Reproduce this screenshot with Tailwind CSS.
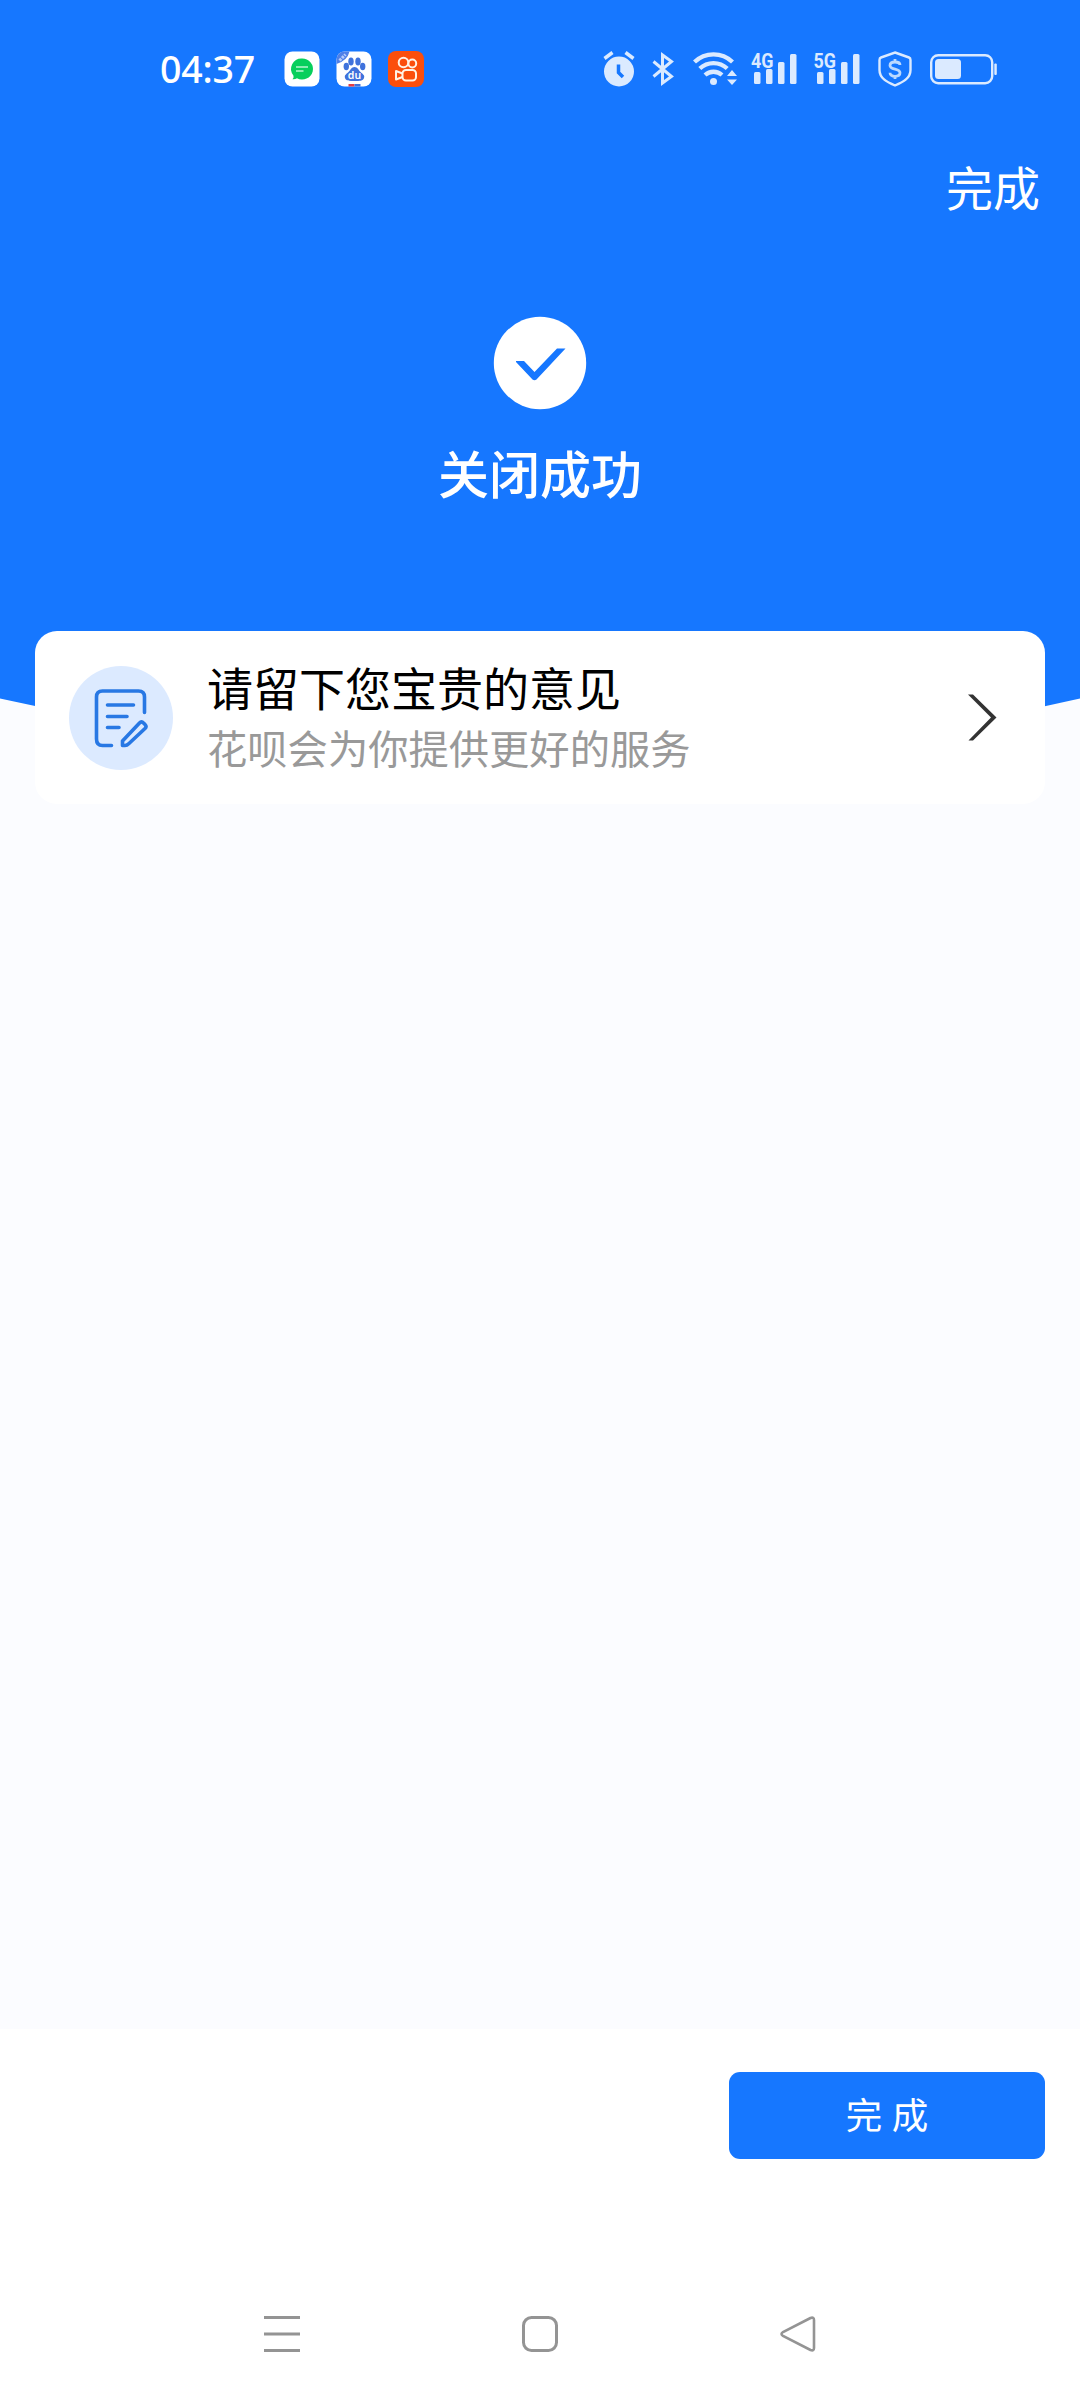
<!DOCTYPE html>
<html lang="zh-CN">
<head>
    <meta charset="UTF-8">
    <meta name="viewport" content="width=device-width, initial-scale=1.0">
    <title>关闭成功</title>
    <script src="https://cdn.jsdelivr.net/npm/@tailwindcss/browser@4"></script>
</head>
<body class="bg-white font-['Noto_Sans','Noto_Sans_CJK_SC',sans-serif]">
    <div class="w-[1080px] h-[2400px] flex flex-col overflow-hidden">
        <main class="h-[2029px] bg-[#fbfcff]">
            <!-- Blue header -->
            <header class="h-[631px] bg-[#1677ff] text-white flex flex-col">
                <!-- Status bar -->
                <div class="h-[138px] pl-[160px] pr-[83px] flex items-center justify-between">
                    <div class="flex items-center">
                        <span class="w-[124px] pb-[1px] text-[37.5px] leading-none font-medium tracking-[-0.2px]">04:37</span>
                        <div class="flex gap-4">
                            <svg class="w-9 h-9" viewBox="0 0 36 36">
                                <rect x="0.5" y="0.5" width="35" height="35" rx="8" fill="#fff"/>
                                <path d="M18 7.500a10.800 10.500 0 1 1-5 19.700q-2 1.300-4.500 1 1.500-1.500 1-3.500A10.500 10.500 0 0 1 18 7.500z" fill="#07cf5c"/>
                                <path d="M12 16h12M12 20h7.500" stroke="#b9f5cf" stroke-width="1.300"/>
                            </svg>
                            <svg class="w-9 h-9" viewBox="0 0 36 36">
                                <rect x="0.5" y="0.5" width="35" height="35" rx="8" fill="#fff"/>
                                <path d="M0.500 13V8.500a8 8 0 0 1 8-8H13.500q-2 9-13 12.500z" fill="#4f80e8"/>
                                <path d="M3.500 9.500l6-6" stroke="#b9cdfa" stroke-width="3" stroke-dasharray="2.500 1"/>
                                <g fill="#3f72dc">
                                    <ellipse cx="10.300" cy="15.500" rx="2.700" ry="3.700"/>
                                    <ellipse cx="15" cy="10.500" rx="2.700" ry="3.900"/>
                                    <ellipse cx="22" cy="10.500" rx="2.700" ry="3.900"/>
                                    <ellipse cx="26.700" cy="15.500" rx="2.700" ry="3.700"/>
                                    <path d="M18.500 16c3 0 4 3 6 5s4.500 3 3.500 6c-1 3-4 3-9.500 3s-8.500 0-9.500-3c-1-3 1.500-4 3.500-6s3-5 6-5z"/>
                                </g>
                                <text x="18.500" y="27.500" text-anchor="middle" font-size="10.500" font-weight="600" fill="#fff">du</text>
                                <path d="M12.500 35.500v-2.500h6v2.500z" fill="#e33b46"/><path d="M18.500 35.500v-2.500h6v2.500z" fill="#3f72dc"/>
                            </svg>
                            <svg class="w-9 h-9" viewBox="0 0 36 36">
                                <rect width="36" height="36" rx="8" fill="#fb4e0c"/>
                                <g fill="none" stroke="#fff3e6" stroke-width="2">
                                    <circle cx="15.500" cy="11.500" r="4.800"/>
                                    <circle cx="24.300" cy="12.500" r="3.900"/>
                                    <rect x="14.500" y="19" width="13.500" height="10.500" rx="3.500"/>
                                    <path d="M14.500 22.500l-6.500-2.500v8.500l6.500-2.500" stroke-linejoin="round"/>
                                </g>
                            </svg>
                        </div>
                    </div>
                    <div class="flex items-center">
                        <svg class="w-8 h-9 mr-[17px]" viewBox="0 0 32 36">
                            <circle cx="16" cy="20.500" r="15" fill="#dbeaff"/>
                            <path d="M1.500 7.500l8-6M30.500 7.500l-8-6" stroke="#dbeaff" stroke-width="3.500"/>
                            <path d="M15.500 13.500v8l4.500 4.500" fill="none" stroke="#1677ff" stroke-width="3.500"/>
                        </svg>
                        <svg class="w-[22px] h-9 mr-[18px]" viewBox="0 0 22 36">
                            <path d="M1.500 10.500L19.500 25.500 10.500 32V4L19.500 10.500 1.500 25.500" fill="none" stroke="#dbeaff" stroke-width="3"/>
                        </svg>
                        <svg class="w-[46px] h-9 mr-[11px]" viewBox="0 0 46 36">
                            <g fill="none" stroke="#dbeaff" stroke-width="4.300">
                                <path d="M2.500 11a27.500 27.500 0 0 1 38 0"/>
                                <path d="M7.800 17.500a20 20 0 0 1 27.400 0"/>
                                <path d="M13 24a12.700 12.700 0 0 1 17 0"/>
                            </g>
                            <circle cx="21.500" cy="30.500" r="3.500" fill="#dbeaff"/>
                            <path d="M35 25l5-6 5 6zM35 28.500h10l-5 5.500z" fill="#dbeaff"/>
                        </svg>
                        <svg class="w-[48px] h-9 mr-[15px] overflow-visible" viewBox="-2 0 48 36">
                            <text x="0" y="16.500" font-family="Roboto" font-size="20.500" font-weight="700" textLength="22.500" lengthAdjust="spacingAndGlyphs" fill="#dbeaff">4G</text>
                            <g fill="#dbeaff">
                                <rect x="3" y="21" width="6.500" height="12" rx="1.500"/>
                                <rect x="15" y="18" width="6.500" height="15" rx="1.500"/>
                                <rect x="27" y="11" width="6.500" height="22" rx="1.500"/>
                                <rect x="39" y="3" width="6.500" height="30" rx="1.500"/>
                            </g>
                        </svg>
                        <svg class="w-[48px] h-9 mr-[18px] overflow-visible" viewBox="-2 0 48 36">
                            <text x="-0.500" y="16.500" font-family="Roboto" font-size="20.500" font-weight="700" textLength="22.500" lengthAdjust="spacingAndGlyphs" fill="#dbeaff">5G</text>
                            <g fill="#dbeaff">
                                <rect x="3" y="21" width="6.500" height="12" rx="1.500"/>
                                <rect x="15" y="18" width="6.500" height="15" rx="1.500"/>
                                <rect x="27" y="11" width="6.500" height="22" rx="1.500"/>
                                <rect x="39" y="3" width="6.500" height="30" rx="1.500"/>
                            </g>
                        </svg>
                        <svg class="w-[34px] h-9 mr-[18px]" viewBox="0 0 34 36">
                            <path d="M17 1.500L31 6.500Q32.500 7 32.500 9v10c0 8-7 12-15.500 15.500C8.500 31 1.500 27 1.500 19V9q0-2 1.500-2.500z" fill="none" stroke="#dbeaff" stroke-width="2.400"/>
                            <path d="M22 14c0-2-2-3-5-3s-5 1.300-5 3.400c0 4.700 10 2.800 10 7.400 0 2.400-2 3.500-5 3.500s-5-1.500-5-3.500M17 8v3M17 25v3" fill="none" stroke="#bcd9ff" stroke-width="2.800"/>
                        </svg>
                        <svg class="w-[67px] h-9" viewBox="0 0 67 36">
                            <rect x="1.200" y="4.200" width="61" height="28" rx="7" fill="none" stroke="#dbeaff" stroke-width="2.400"/>
                            <rect x="5" y="8" width="26" height="20" rx="3.500" fill="#dbeaff"/>
                            <rect x="64.300" y="12.500" width="2.500" height="11.500" rx="1" fill="#dbeaff"/>
                        </svg>
                    </div>
                </div>

                <div class="h-[100px] pr-[40px] flex justify-end items-center">
                    <a href="#" class="text-[47px] leading-none">完成</a>
                </div>

                <div class="mt-[78px] flex flex-col items-center">
                    <svg class="w-[94px] h-[94px]" viewBox="0 0 94 94">
                        <circle cx="47" cy="47" r="46.200" fill="#fff"/>
                        <path d="M23 45h8l10.500 11L64 32.500h8.500L43.500 63.500q-2 1.500-4 0L23 46z" fill="#1677ff"/>
                    </svg>
                    <h1 class="mt-[38px] text-[51px] leading-[52px] font-medium">关闭成功</h1>
                </div>
            </header>

            <!-- Curved lower edge of the header with the feedback card over it -->
            <section class="relative px-[35px]">
                <svg class="absolute left-0 top-0 w-[1080px] h-[140px]" viewBox="0 0 1080 140">
                    <path d="M0 0H1080V67.500Q540 190 0 67.500z" fill="#1677ff"/>
                </svg>
                <a href="#" class="relative h-[173px] pl-[34px] pr-[46px] bg-white rounded-[22px] flex items-center">
                    <svg class="w-[104px] h-[104px]" viewBox="0 0 104 104">
                        <circle cx="52" cy="52" r="52" fill="#dceaff"/>
                        <g fill="none" stroke="#2878e4" stroke-width="3.600" stroke-linecap="round" stroke-linejoin="round">
                            <path d="M75.500 46.500V31q0-6-6-6H33.500q-6 0-6 6v42q0 6.500 6 6.500h9"/>
                            <path d="M38.500 39h26M38.500 50.500h19.500M38.500 61.500h11.500"/>
                            <path d="M53.500 79.500v-4.500L70.500 57q2-2.200 4 0l1.500 1.500q2 2 0 4L60 77.500q-2 2-4 2z"/>
                        </g>
                    </svg>
                    <div class="ml-[34px] mt-[1px] flex-1">
                        <div class="text-[46px] leading-[60px] text-black">请留下您宝贵的意见</div>
                        <div class="text-[40.3px] leading-[61px] text-[#999]">花呗会为你提供更好的服务</div>
                    </div>
                    <svg class="w-[32px] h-[48px]" viewBox="0 0 32 48">
                        <path d="M1 0.500h5L29.500 23.500 6 46.500H1.500L24 23.500z" fill="#333"/>
                    </svg>
                </a>
            </section>
        </main>

        <footer class="h-[251px] pt-[43px] pr-[35px] flex justify-end items-start">
            <button class="w-[316px] h-[87px] bg-[#1677ff] rounded-[11px] text-white text-[36.5px] leading-none">完 成</button>
        </footer>

        <!-- System navigation -->
        <nav class="h-[120px] pt-[35px] px-[263px] flex justify-between items-start">
            <svg class="w-[38px] h-[38px]" viewBox="0 0 38 38">
                <path d="M1 2.500h36M1 19h36M1 35.500h36" stroke="#949494" stroke-width="3.200"/>
            </svg>
            <svg class="w-[38px] h-[38px]" viewBox="0 0 38 38">
                <rect x="2.500" y="2.500" width="33" height="33" rx="8" fill="none" stroke="#949494" stroke-width="3"/>
            </svg>
            <svg class="w-[38px] h-[38px]" viewBox="0 0 38 38">
                <path d="M31.500 3L4 17q-3 2 0 4L31.500 35q3.500 1.300 3.500-2V5q0-3.300-3.500-2z" fill="none" stroke="#949494" stroke-width="2.600"/>
            </svg>
        </nav>
    </div>
</body>
</html>
